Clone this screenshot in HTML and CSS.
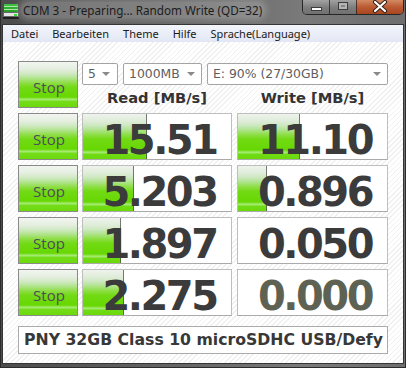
FILE: index.html
```html
<!DOCTYPE html>
<html lang="de">
<head>
    <meta charset="UTF-8">
    <title>CDM 3</title>
    <link rel="stylesheet" href="styles.css">
</head>
<body>
<div class="window">
    <div class="titlebar">
        <svg class="app-icon" width="16" height="16" viewBox="0 0 16 16">
            <rect x="1" y="1" width="14" height="2" fill="#3fbf3f"/>
            <rect x="1" y="3" width="14" height="1" fill="#a8e8a8"/>
            <rect x="1" y="4" width="14" height="2" fill="#2fae2f"/>
            <rect x="1" y="6" width="14" height="1" fill="#a8e8a8"/>
            <rect x="1" y="7" width="14" height="2" fill="#28a028"/>
            <rect x="0.5" y="9.5" width="15" height="4" fill="#e4e4e4" stroke="#666"/>
            <rect x="11" y="11" width="3" height="2" fill="#33dd33"/>
            <rect x="0" y="14" width="16" height="2" fill="#1e1e1e"/>
        </svg>
        <span class="title">CDM 3 - Preparing... Random Write (QD=32)</span>
        <div class="caption">
            <span class="cap min">
                <svg width="26" height="14" viewBox="0 0 26 14">
                    <rect x="8.5" y="7.5" width="10" height="3" fill="#fafafa" stroke="#3c3c3c"/>
                </svg>
            </span>
            <span class="cap max">
                <svg width="26" height="14" viewBox="0 0 26 14">
                    <rect x="8.5" y="2.5" width="9" height="7" fill="none" stroke="#3c3c3c"/>
                    <rect x="10" y="4" width="6" height="4" fill="none" stroke="#b4b4b4" stroke-width="2"/>
                </svg>
            </span>
            <span class="cap close">
                <svg width="46" height="14" viewBox="0 0 46 14">
                    <path d="M18 2 L28 11 M28 2 L18 11" stroke="#3a2418" stroke-width="4.2" stroke-linecap="round"/>
                    <path d="M18 2 L28 11 M28 2 L18 11" stroke="#ffffff" stroke-width="2.2" stroke-linecap="round"/>
                </svg>
            </span>
        </div>
    </div>

    <div class="client">
        <div class="menubar">
            <span>Datei</span>
            <span>Bearbeiten</span>
            <span>Theme</span>
            <span>Hilfe</span>
            <span>Sprache(Language)</span>
        </div>

        <div class="panel">
            <div class="row">
                <button class="stop">Stop</button>
                <div class="setup">
                    <div class="selects">
                        <div class="select count">5</div>
                        <div class="select size">1000MB</div>
                        <div class="select drive">E: 90% (27/30GB)</div>
                    </div>
                    <div class="heads">
                        <div class="head read">Read [MB/s]</div>
                        <div class="head write">Write [MB/s]</div>
                    </div>
                </div>
            </div>

            <div class="row">
                <button class="stop">Stop</button>
                <div class="result read"><div class="bar" style="width:63px"></div><span class="val">15.51</span></div>
                <div class="result write"><div class="bar" style="width:61px"></div><span class="val">11.10</span></div>
            </div>
            <div class="row">
                <button class="stop">Stop</button>
                <div class="result read"><div class="bar" style="width:50px"></div><span class="val">5.203</span></div>
                <div class="result write"><div class="bar" style="width:28px"></div><span class="val">0.896</span></div>
            </div>
            <div class="row">
                <button class="stop">Stop</button>
                <div class="result read"><div class="bar" style="width:37px"></div><span class="val">1.897</span></div>
                <div class="result write"><span class="val">0.050</span></div>
            </div>
            <div class="row">
                <button class="stop">Stop</button>
                <div class="result read"><div class="bar" style="width:40px"></div><span class="val">2.275</span></div>
                <div class="result write"><span class="val idle">0.000</span></div>
            </div>

            <div class="comment">PNY 32GB Class 10 microSDHC USB/Defy</div>
        </div>
    </div>
</div>
</body>
</html>
```

FILE: styles.css
```css
body {
    margin: 0;
}

.window {
    box-sizing: border-box;
    width: 406px;
    height: 368px;
    display: flex;
    flex-direction: column;
    padding: 0 1px 3px;
    border: 1px solid #2c2c2c;
    border-top: 0;
    background: linear-gradient(90deg, #4c4c4c 0%, #666 45%, #7a7a7a 75%, #6e6e6e 100%);
}

/* title bar */
.titlebar {
    height: 24px;
    display: flex;
    align-items: flex-start;
    flex-shrink: 0;
}

.app-icon {
    margin: 3px 0 0 1px;
}

.title {
    margin: 2px 0 0 2px;
    padding: 0 2px;
    font-family: "Noto Sans", sans-serif;
    font-size: 11.7px;
    line-height: 16px;
    color: #1c1c1c;
    white-space: nowrap;
    border-radius: 8px;
    background: rgba(190, 190, 190, .35);
    box-shadow: 0 0 6px 3px rgba(190, 190, 190, .35);
}

.caption {
    margin-left: auto;
    margin-right: 0;
    display: flex;
    height: 14px;
    border: 1px solid rgba(25, 25, 25, .85);
    border-top: 0;
    border-radius: 0 0 5px 5px;
    overflow: hidden;
}

.cap {
    display: block;
    height: 14px;
}

.cap svg {
    display: block;
}

.min, .max {
    width: 26px;
    background: linear-gradient(#a2a2a2, #7c7c7c 55%, #707070);
}

.max, .close {
    border-left: 1px solid rgba(25, 25, 25, .7);
}

.close {
    width: 46px;
    background: linear-gradient(#d48a64, #bb5a33 50%, #a9461f);
}

/* client area */
.client {
    flex: 1;
    display: flex;
    flex-direction: column;
    border: 1px solid #353535;
    background-color: #fff;
    background-image: repeating-linear-gradient(135deg, #fff 0, #fff 2.6px, #f0f0f0 2.6px, #f0f0f0 3.6px);
}

.menubar {
    height: 17px;
    display: flex;
    align-items: center;
    padding-left: 1px;
    background: linear-gradient(#f3f5fb, #e2e7f4);
    font-family: "Noto Sans", sans-serif;
    font-size: 11px;
    color: #1a1a1a;
}

.menubar span {
    padding: 0 7px;
}

.panel {
    display: flex;
    flex-direction: column;
    gap: 5px;
    padding: 19px 0 0 15px;
}

.row {
    display: flex;
    height: 47px;
}

.stop {
    box-sizing: border-box;
    width: 60px;
    height: 47px;
    margin: 0 4px 0 0;
    padding: 4px 0 0 2px;
    border: 1px solid #8a8a8a;
    font-family: "Open Sans", sans-serif;
    font-size: 15px;
    color: #4f4b59;
    cursor: pointer;
    background: linear-gradient(#f2f5f0 0%, #e4eedf 16%, #d0e9c2 26%, #b2e48e 36%, #8fde48 46%, #73da16 56%, #67d802 78%, #a6eb74 83%, #74dc18 88%, #6cd90c 100%);
}

.setup {
    width: 306px;
    display: flex;
    flex-direction: column;
}

.selects {
    display: flex;
    gap: 5px;
    margin-top: 2px;
}

.select {
    box-sizing: border-box;
    position: relative;
    height: 22px;
    padding-left: 5px;
    border: 1px solid #a4a4a4;
    border-radius: 2px;
    background: #fff;
    font-family: "DejaVu Sans", sans-serif;
    font-size: 12.4px;
    line-height: 20px;
    color: #5e5e5e;
}

.select::after {
    content: "";
    position: absolute;
    top: 8px;
    right: 6px;
    border-left: 4px solid transparent;
    border-right: 4px solid transparent;
    border-top: 4px solid #8a8a8a;
}

.count {
    width: 36px;
}

.count::after {
    right: 7px;
}

.size {
    width: 79px;
}

.drive {
    width: 181px;
}

.heads {
    display: flex;
    flex: 1;
}

.head {
    font-family: "DejaVu Sans", sans-serif;
    font-weight: bold;
    font-size: 14.7px;
    line-height: 23px;
    padding-top: 1px;
    text-align: center;
    color: #333;
}

.read {
    width: 150px;
    margin-right: 5px;
}

.write {
    width: 151px;
}

.result {
    box-sizing: border-box;
    position: relative;
    height: 47px;
    border: 1px solid #bebebe;
    border-bottom-color: #aaa;
    background: #fff;
    text-align: center;
}

.bar {
    position: absolute;
    left: 0;
    top: 0;
    bottom: 0;
    border-right: 1px solid rgba(70, 70, 70, .7);
    background: linear-gradient(#eef3ec 0%, #dfecd9 16%, #cbe8bd 26%, #ade38a 36%, #8ede46 46%, #72da14 56%, #66d802 80%, #a8ec78 85%, #70db14 90%, #6ad90a 100%);
}

.val {
    position: relative;
    display: block;
    padding: 7px 0 0 5px;
    font-family: "DejaVu Sans", sans-serif;
    font-weight: bold;
    font-size: 40px;
    line-height: 38px;
    letter-spacing: -2.5px;
    color: #3b3b3b;
}

.val.idle {
    color: #5d6253;
}

.comment {
    box-sizing: border-box;
    width: 370px;
    height: 28px;
    margin-top: 5px;
    padding-left: 5px;
    border: 1px solid #ababab;
    background: #fff;
    font-family: "DejaVu Sans", sans-serif;
    font-weight: bold;
    font-size: 15.7px;
    line-height: 26px;
    color: #383838;
    white-space: nowrap;
}
```
